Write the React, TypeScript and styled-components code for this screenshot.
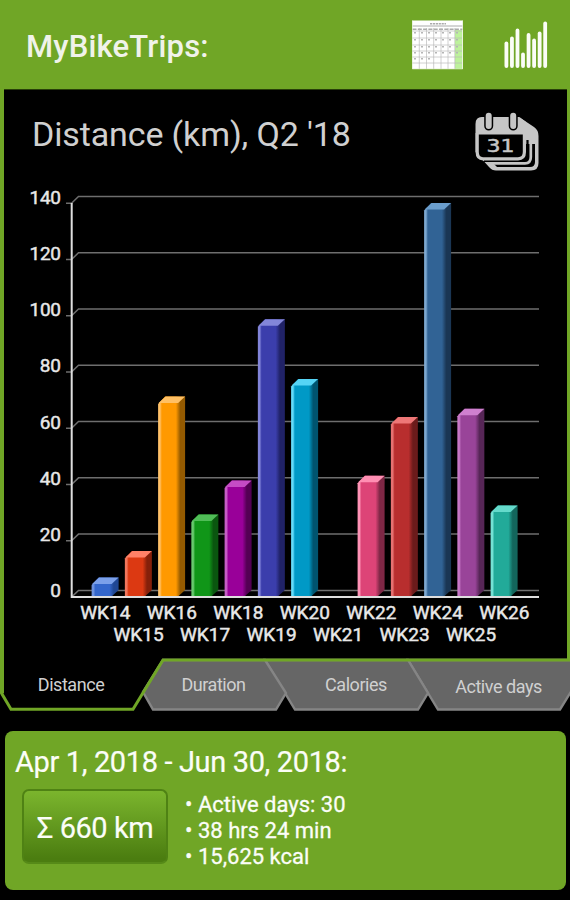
import React from 'react';
import styled, { createGlobalStyle } from 'styled-components';

const GREEN = '#70a626';

const GlobalStyle = createGlobalStyle`
  body { margin: 0; background: #000; }
  * { box-sizing: border-box; }
`;

const Screen = styled.main`
  width: 570px;
  height: 900px;
  display: flex;
  flex-direction: column;
  overflow: hidden;
  background: #000;
  font-family: Roboto, "Liberation Sans", sans-serif;
`;

const Header = styled.header`
  flex: none;
  height: 89px;
  display: flex;
  align-items: center;
  padding: 0 22px 0 26px;
  background: ${GREEN};
`;

const AppTitle = styled.h1`
  flex: 1;
  margin: 4px 0 0;
  font-size: 31px;
  line-height: 40px;
  font-weight: 500;
  letter-spacing: 0.18px;
  color: #f0f3ea;
  white-space: nowrap;
`;

const HeaderIcons = styled.div`
  display: flex;
  align-items: center;
  gap: 40px;
`;

const Icon = styled.svg`
  display: block;
  flex: none;
`;

const ChartPanel = styled.section`
  flex: none;
  height: 569px;
  border: solid ${GREEN};
  border-width: 0 3px 0 4px;
  box-shadow: inset 0 1px 0 #294009;
`;

const ChartHeading = styled.div`
  height: 97px;
  display: flex;
  align-items: flex-start;
  justify-content: space-between;
  padding: 23px 28px 0 28px;
`;

const ChartTitle = styled.h2`
  margin: 2px 0 0;
  font-size: 34px;
  line-height: 40px;
  font-weight: 400;
  letter-spacing: -0.13px;
  color: #d0d0d0;
  white-space: nowrap;
`;

const Chart = styled.svg`
  display: block;
  font-family: Roboto, "Liberation Sans", sans-serif;
`;

const AxisLabel = styled.text`
  font-size: 19px;
  font-weight: 400;
  fill: #e8e8e8;
  stroke: #e8e8e8;
  stroke-width: 0.45px;
`;

const TabBar = styled.nav`
  position: relative;
  flex: none;
  height: 73px;
  display: grid;
  grid-template-columns: 142px 143px 142px 143px;
`;

const TabShapes = styled.svg`
  position: absolute;
  inset: 0;
`;

const Tab = styled.button<{ $drop?: number }>`
  position: relative;
  height: 52px;
  padding: ${p => 2 + (p.$drop ?? 0)}px 0 0;
  border: 0;
  background: none;
  color: #d0d0d0;
  font: 400 18px/22px Roboto, sans-serif;
  letter-spacing: -0.45px;
  white-space: nowrap;
`;

const Summary = styled.section`
  flex: none;
  width: 561px;
  height: 159px;
  margin-left: 5px;
  padding: 11px 10px;
  border-radius: 8px;
  background: ${GREEN};
  color: #fbfdf7;
`;

const Period = styled.h2`
  margin: 0;
  font-size: 29px;
  line-height: 40px;
  font-weight: 400;
  letter-spacing: -0.36px;
  -webkit-text-stroke: 0.2px #fbfdf7;
  white-space: nowrap;
`;

const SummaryBody = styled.div`
  display: flex;
  gap: 17px;
  padding: 7px 0 0 7px;
`;

const TotalButton = styled.button`
  width: 146px;
  height: 75px;
  padding: 3px 0 0;
  border: 2px solid #4f8214;
  border-bottom-color: #568a18;
  border-radius: 7px;
  background: linear-gradient(#7bb52d, #689f22 38%, #4b7d10 95%);
  color: #fbfdf7;
  font: 400 29px/34px Roboto, sans-serif;
  letter-spacing: -0.45px;
  -webkit-text-stroke: 0.2px #fbfdf7;
  white-space: nowrap;
`;

const Stats = styled.ul`
  margin: 0;
  padding: 3px 0 0;
  list-style: none;
`;

const Stat = styled.li`
  font-size: 22px;
  line-height: 26px;
  -webkit-text-stroke: 0.3px #fbfdf7;
  white-space: nowrap;
  &::before { content: '•'; display: inline-block; width: 13px; font-size: 22px; line-height: 20px; }
`;

type Week = { label: string; top: number; main: string; light: string; edge: string; dark: string };

const weeks: Week[] = [
  { label: 'WK14', top: 577.5, main: '#3366cc', light: '#7ba0ea', edge: '#6c91df', dark: '#1f4693' },
  { label: 'WK15', top: 551, main: '#dc3912', light: '#ff8167', edge: '#f1765c', dark: '#85200a' },
  { label: 'WK16', top: 396.5, main: '#ff9900', light: '#ffc064', edge: '#ffc168', dark: '#945a00' },
  { label: 'WK17', top: 514.5, main: '#109618', light: '#50bd57', edge: '#68ca6e', dark: '#0a560f' },
  { label: 'WK18', top: 480.5, main: '#990099', light: '#c54bc5', edge: '#c55cc5', dark: '#530053' },
  { label: 'WK19', top: 319.3, main: '#3b3eac', light: '#8386d9', edge: '#8184d9', dark: '#202267' },
  { label: 'WK20', top: 379, main: '#0099c6', light: '#56d4f5', edge: '#65dcfa', dark: '#00546f' },
  { label: 'WK21', top: 590, main: '', light: '', edge: '', dark: '' },
  { label: 'WK22', top: 475.7, main: '#dd4477', light: '#ff8fb3', edge: '#ff93b6', dark: '#7e2745' },
  { label: 'WK23', top: 417, main: '#b82e2e', light: '#ee7777', edge: '#e67171', dark: '#6b1b1b' },
  { label: 'WK24', top: 203, main: '#316395', light: '#6a9dcc', edge: '#7da8d0', dark: '#1a3654' },
  { label: 'WK25', top: 408.7, main: '#994499', light: '#cf80cf', edge: '#c878c8', dark: '#572657' },
  { label: 'WK26', top: 505.5, main: '#22aa99', light: '#65dacb', edge: '#75e2d5', dark: '#13665c' },
];

const ticks = [140, 120, 100, 80, 60, 40, 20, 0];

function Bar({ week, index }: { week: Week; index: number }) {
  const x = 91.6 + index * 33.25;
  const front = week.top + 6.5;
  const id = `side-${week.label}`;
  return (
    <g>
      <defs>
        <linearGradient id={id} x1="0" x2="1">
          <stop offset="0" stopColor={week.edge} />
          <stop offset=".07" stopColor={week.edge} />
          <stop offset=".14" stopColor={week.main} />
          <stop offset=".66" stopColor={week.main} />
          <stop offset=".82" stopColor={week.dark} />
          <stop offset="1" stopColor={week.dark} />
        </linearGradient>
      </defs>
      <path
        d={`M${x} ${front + 1}L${x + 7} ${week.top}H${x + 27}V590L${x + 20.5} 596H${x}Z`}
        fill={`url(#${id})`}
      />
      <path
        d={`M${x + 0.5} ${front}L${x + 7.5} ${week.top}H${x + 27}L${x + 20} ${front}Z`}
        fill={week.light}
      />
    </g>
  );
}

function DistanceChart() {
  return (
    <Chart width="563" height="472" viewBox="4 186 563 472">
      {ticks.map((value, i) => {
        const y = 196.5 + i * 56.27;
        return (
          <g key={value}>
            <path d={value ? `M66 ${y + 6.7}H71.5L78.5 ${y}H539` : `M71.5 ${y + 6.7}L78.5 ${y}H539`} fill="none" stroke="#6e6e6e" strokeWidth="1.5" />
            <AxisLabel x="61" y={y + 7} textAnchor="end" textLength={value >= 100 ? 31.5 : undefined}>{value}</AxisLabel>
          </g>
        );
      })}
      {weeks.map((week, i) => week.main && <Bar key={week.label} week={week} index={i} />)}
      <path d="M71.7 203V597H539" fill="none" stroke="#dedede" strokeWidth="2" />
      {weeks.map((week, i) => (
        <AxisLabel key={week.label} x={105.3 + i * 33.25} y={i % 2 ? 641.3 : 619.2} textAnchor="middle">
          {week.label}
        </AxisLabel>
      ))}
    </Chart>
  );
}

function MonthSheetIcon() {
  const columns = [419.3, 426.5, 433.7, 441, 448, 454.8];
  const rows = [31, 38, 45, 51, 57, 63];
  const marks = [0, 1, 2, 3, 4, 5, 6];
  return (
    <Icon width="51" height="50" viewBox="412 20 51 50">
      <path d="M412 20.5H463V69H412Z" fill="#fff" />
      <path d="M455 30H462V69H455Z" fill="#bdf29b" />
      <path d="M412.5 26H462.5" stroke="#aaa" />
      <path d="M412.5 29.3H462.5" stroke="#aaa" strokeWidth="1.5" strokeDasharray="4 1.3" />
      <path d="M430 23.7H446" stroke="#aaa" strokeWidth="1.5" strokeDasharray="2.2 .7" />
      <g stroke="#b7b7b7" strokeWidth=".65">
        {columns.map(x => <path key={x} d={`M${x} 28V69`} />)}
        {rows.map(y => <path key={y} d={`M412 ${y}H462`} />)}
      </g>
      <g fill="#b5b5b5">
        {rows.slice(0, 5).map((y, row) =>
          marks.slice(0, row === 4 ? 3 : 7).map(col => (
            <rect key={`${row}-${col}`} x={414 + col * 7} y={y + 1} width="2" height="1.5" />
          )),
        )}
      </g>
      <path d="M412.3 20.5V69H462.7V20.5" fill="none" stroke="#d7e8bf" strokeWidth=".6" />
    </Icon>
  );
}

function BarsIcon() {
  const tops = [42, 37, 29, 53, 33.5, 39, 32, 22];
  return (
    <Icon width="45" height="50" viewBox="503 19 45 50">
      {tops.map((top, i) => (
        <path
          key={i}
          d={`M${506.4 + i * 5.54} ${top + 0.5}V65`}
          stroke="#fbfdf7"
          strokeWidth="3.8"
          strokeLinecap="round"
        />
      ))}
    </Icon>
  );
}

function CalendarStackIcon() {
  return (
    <Icon width="64" height="59" viewBox="475 112 64 59">
      <path d="M482 117H519L534 127Q538.5 130 538.5 136V163Q538.5 170.5 531 170.5H496Q492 170.5 489 167L475.5 152V124Q475.5 117 482 117Z" fill="#c6c6c6" />
      <path d="M524 144H535V162Q535 167 530 167H497L493 163Z" fill="#000" />
      <path d="M523 138H530.8V157Q530.8 163.3 525 163.3H489L484 159" fill="none" stroke="#c6c6c6" strokeWidth="2.7" />
      <path d="M527.5 140V155Q527.5 161 521 161H484" fill="none" stroke="#000" strokeWidth="2.2" />
      <path d="M477.2 133V152Q477.2 158.8 483 158.8H518Q524.4 158.8 524.4 152V133" fill="#000" stroke="#c6c6c6" strokeWidth="3.2" />
      <path d="M476 134.5V124Q476 117.5 482 117.5H520L526 122V134.5Z" fill="#c6c6c6" />
      <path d="M488.7 115.8V126M513.2 115.8V126" stroke="#000" strokeWidth="9" strokeLinecap="round" />
      <path d="M488.7 115.8V126M513.2 115.8V126" stroke="#c6c6c6" strokeWidth="6" strokeLinecap="round" />
      <text x="486.5" y="152.4" textLength="28" lengthAdjust="spacingAndGlyphs" fill="#c6c6c6" fontFamily="DejaVu Sans" fontSize="18.5" stroke="#c6c6c6" strokeWidth=".5">31</text>
    </Icon>
  );
}

export default function App() {
  return (
    <>
      <GlobalStyle />
      <Screen>
        <Header>
          <AppTitle>MyBikeTrips:</AppTitle>
          <HeaderIcons>
            <MonthSheetIcon />
            <BarsIcon />
          </HeaderIcons>
        </Header>
        <ChartPanel>
          <ChartHeading>
            <ChartTitle>Distance (km), Q2 '18</ChartTitle>
            <CalendarStackIcon />
          </ChartHeading>
          <DistanceChart />
        </ChartPanel>
        <TabBar>
          <TabShapes width="570" height="73" viewBox="0 658 570 73">
            <g fill="#666" stroke="#858585" strokeWidth="2.4">
              <path d="M408 660L438 709.5H560L572 690V660Z" />
              <path d="M265 660L295 709.5H418L428 693L408 660Z" />
              <path d="M163 660L143 692L153 709.5H276L286 693L265 660Z" />
            </g>
            <path d="M2 656V694L11 709.3H133L163 660H568.5V656" fill="none" stroke={GREEN} strokeWidth="3" />
            <path d="M0 656H4V693L0 694Z" fill={GREEN} />
          </TabShapes>
          <Tab>Distance</Tab>
          <Tab>Duration</Tab>
          <Tab>Calories</Tab>
          <Tab $drop={3}>Active days</Tab>
        </TabBar>
        <Summary>
          <Period>Apr 1, 2018 - Jun 30, 2018:</Period>
          <SummaryBody>
            <TotalButton>Σ 660 km</TotalButton>
            <Stats>
              <Stat>Active days: 30</Stat>
              <Stat>38 hrs 24 min</Stat>
              <Stat>15,625 kcal</Stat>
            </Stats>
          </SummaryBody>
        </Summary>
      </Screen>
    </>
  );
}
